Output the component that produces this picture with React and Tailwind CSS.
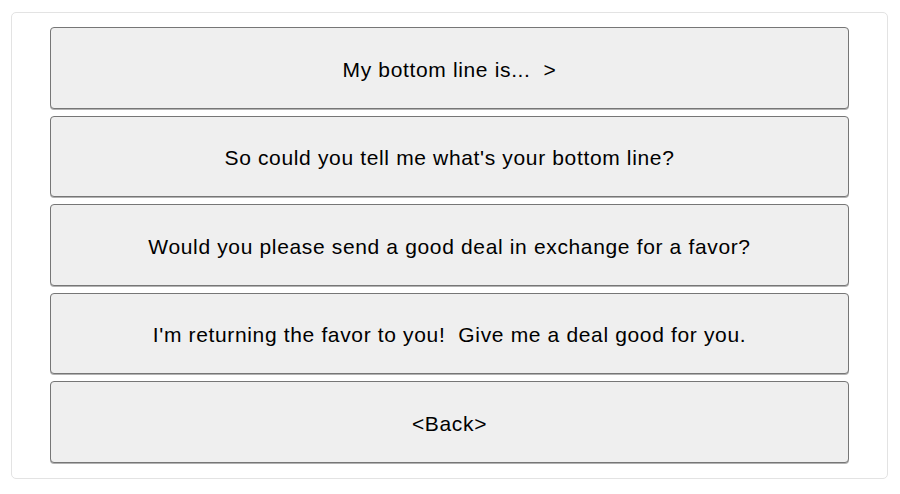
export default function App() {
  const options = [
    "My bottom line is...  >",
    "So could you tell me what's your bottom line?",
    "Would you please send a good deal in exchange for a favor?",
    "I'm returning the favor to you!  Give me a deal good for you.",
    "<Back>",
  ];

  return (
    <div className="w-[900px] h-[494px] bg-white pt-3 px-[11px]" style={{ fontFamily: '"Liberation Sans", Arial, sans-serif' }}>
      <div className="w-[877px] border border-[#e3e3e3] rounded-[5px] px-[38px] pt-[14px] pb-[15px] flex flex-col gap-[7px]">
        {options.map((text) => (
          <button
            key={text}
            className="h-[81.5px] w-full bg-[#efefef] border border-[#767676] rounded-[4px] shadow-[0_1px_0_rgba(0,0,0,0.3)] text-[21px] tracking-[0.65px] text-black whitespace-pre pt-[3px]"
          >
            {text}
          </button>
        ))}
      </div>
    </div>
  );
}
